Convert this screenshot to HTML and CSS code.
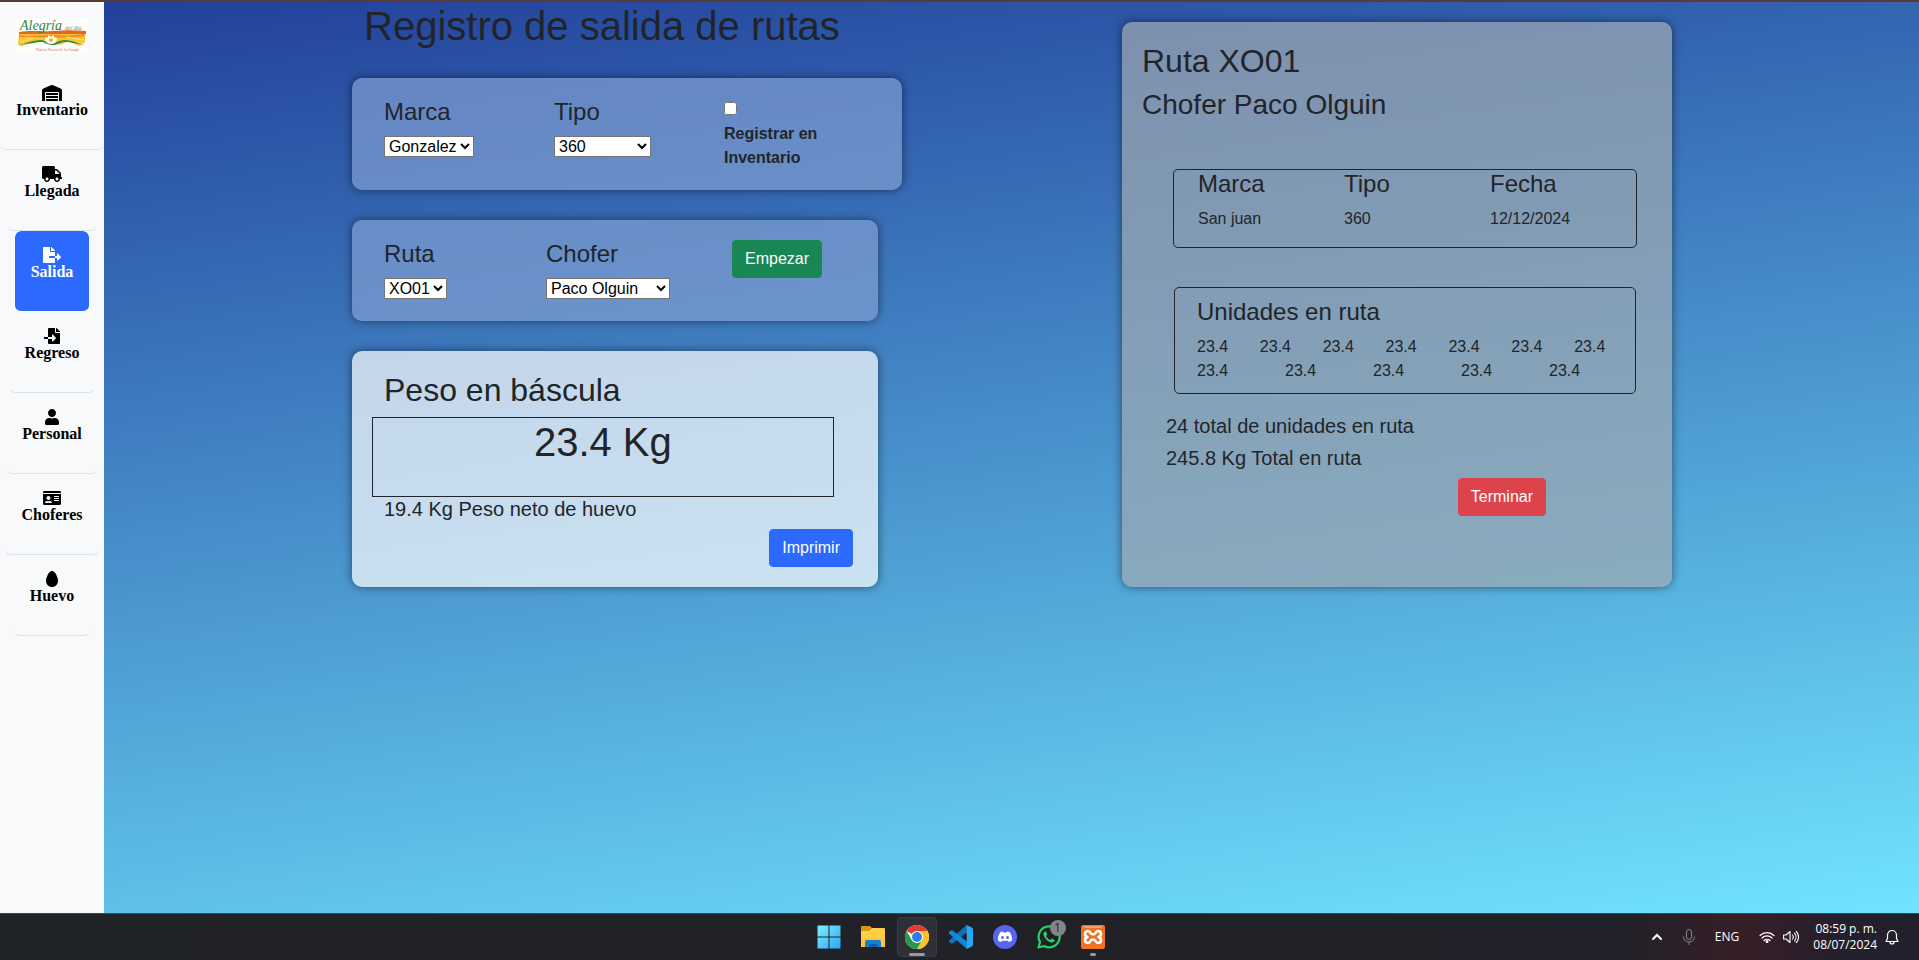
FILE: index.html
```html
<!DOCTYPE html>
<html lang="es">
<head>
<meta charset="utf-8">
<meta name="viewport" content="width=device-width, initial-scale=1">
<title>Registro de salida de rutas</title>
<link rel="stylesheet" href="styles.css">
</head>
<body>
<div class="screen">
  <div class="app">
    <nav class="sidebar" aria-label="Principal">
      <a class="logo" href="#inicio" aria-label="Inicio">
        <svg viewBox="0 0 72 35" width="72" height="35" aria-hidden="true">
          <rect width="72" height="35" fill="#fdfdf9"/>
          <path d="M3 14c12-2 22 0 34-1s22-1 33 0v3H3z" fill="#e5642c"/>
          <path d="M3 16h66v8l-6 4-10-5-9 4-10-6-10 3-9 1-9 3-4-1z" fill="#f7c62f"/>
          <path d="M3 17c14 2 24-1 36 0s20 0 30-1v2c-14 3-44 1-66 1z" fill="#ef9226"/>
          <path d="M4 24l14-4M6 27l16-5M50 19l18 3M52 22l14 4" stroke="#fbe58a" stroke-width="1"/>
          <path d="M29 22l1-3 2 1 0-3 3 2 3-2 0 3 2-1 1 3-3 3h-6z" fill="#fff"/>
          <circle cx="35" cy="22" r="2" fill="#f3b12c"/>
          <path d="M3 27c8-2 15-5 22-5 5 0 6 4 10 4s7-4 14-4 12 3 20 5c-9-1-14-3-20-3-6 0-8 4-14 3s-6-3-10-3-12 2-22 3z" fill="#3f8a3a"/>
          <text class="logo-name" x="4" y="12">Alegría</text>
          <text class="logo-sub" x="49" y="12">del día</text>
          <text class="logo-tag" x="20" y="33">Huevo Fresco de la Granja</text>
        </svg>
      </a>
      <a class="nav-item" href="#inventario">
        <svg class="nav-icon" viewBox="0 0 640 512" aria-hidden="true"><path d="M504 352H136.400c-4.400 0-8 3.600-8 8l-.1 48c0 4.400 3.600 8 8 8H504c4.400 0 8-3.600 8-8v-48c0-4.400-3.600-8-8-8zm0 96H136.100c-4.400 0-8 3.600-8 8l-.1 48c0 4.400 3.600 8 8 8h368c4.400 0 8-3.600 8-8v-48c0-4.400-3.600-8-8-8zm0-192H136.600c-4.400 0-8 3.600-8 8l-.1 48c0 4.400 3.600 8 8 8H504c4.400 0 8-3.600 8-8v-48c0-4.400-3.600-8-8-8zm106.500-139L338.400 3.700a48.150 48.150 0 0 0-36.900 0L29.500 117C11.700 124.500 0 141.900 0 161.300V504c0 4.400 3.600 8 8 8h80c4.400 0 8-3.600 8-8V256c0-17.600 14.600-32 32.600-32h382.800c18 0 32.600 14.400 32.600 32v248c0 4.400 3.600 8 8 8h80c4.400 0 8-3.600 8-8V161.300c0-19.400-11.700-36.800-29.500-44.300z"/></svg>
        <span>Inventario</span>
      </a>
      <a class="nav-item" href="#llegada">
        <svg class="nav-icon" viewBox="0 0 640 512" aria-hidden="true"><path d="M624 352h-16V243.900c0-12.700-5.100-24.900-14.100-33.900L494 110.100c-9-9-21.200-14.100-33.900-14.100H416V48c0-26.500-21.500-48-48-48H48C21.500 0 0 21.500 0 48v320c0 26.500 21.500 48 48 48h16c0 53 43 96 96 96s96-43 96-96h128c0 53 43 96 96 96s96-43 96-96h48c8.800 0 16-7.200 16-16v-32c0-8.800-7.200-16-16-16zM160 464c-26.500 0-48-21.500-48-48s21.500-48 48-48 48 21.500 48 48-21.500 48-48 48zm320 0c-26.500 0-48-21.500-48-48s21.500-48 48-48 48 21.500 48 48-21.500 48-48 48zm80-208H416V144h44.100l99.900 99.900V256z"/></svg>
        <span>Llegada</span>
      </a>
      <a class="nav-item active" href="#salida" aria-current="page">
        <svg class="nav-icon" viewBox="0 0 576 512" aria-hidden="true"><path d="M384 121.900c0-6.300-2.500-12.400-7-16.900L279.100 7c-4.500-4.500-10.600-7-17-7H256v128h128zM571 308l-95.700-96.400c-10.100-10.100-27.400-3-27.400 11.300V288h-64v64h64v65.200c0 14.300 17.300 21.400 27.400 11.300L571 332c6.600-6.600 6.600-17.400 0-24zm-379 28v-32c0-8.800 7.200-16 16-16h176V160H248c-13.200 0-24-10.800-24-24V0H24C10.700 0 0 10.700 0 24v464c0 13.300 10.700 24 24 24h336c13.300 0 24-10.700 24-24V352H208c-8.800 0-16-7.200-16-16z"/></svg>
        <span>Salida</span>
      </a>
      <a class="nav-item" href="#regreso">
        <svg class="nav-icon" viewBox="0 0 512 512" aria-hidden="true"><path d="M16 288c-8.800 0-16 7.200-16 16v32c0 8.800 7.200 16 16 16h112v-64zm489-183L407.100 7c-4.500-4.500-10.600-7-17-7H384v128h128v-6.100c0-6.300-2.500-12.400-7-16.900zm-153 31V0H152c-13.300 0-24 10.700-24 24v264h128v-65.200c0-14.300 17.300-21.400 27.400-11.300L379 308c6.600 6.700 6.600 17.400 0 24l-95.700 96.400c-10.100 10.100-27.400 3-27.400-11.300V352H128v136c0 13.300 10.700 24 24 24h336c13.300 0 24-10.700 24-24V160H376c-13.200 0-24-10.800-24-24z"/></svg>
        <span>Regreso</span>
      </a>
      <a class="nav-item" href="#personal">
        <svg class="nav-icon" viewBox="0 0 448 512" aria-hidden="true"><path d="M224 256c70.700 0 128-57.300 128-128S294.700 0 224 0 96 57.300 96 128s57.300 128 128 128zm89.600 32h-16.700c-22.200 10.200-46.900 16-72.900 16s-50.600-5.800-72.900-16h-16.700C60.200 288 0 348.200 0 422.400V464c0 26.500 21.500 48 48 48h352c26.500 0 48-21.500 48-48v-41.600c0-74.200-60.200-134.400-134.400-134.400z"/></svg>
        <span>Personal</span>
      </a>
      <a class="nav-item" href="#choferes">
        <svg class="nav-icon" viewBox="0 0 576 512" aria-hidden="true"><path d="M528 32H48C21.500 32 0 53.500 0 80v16h576V80c0-26.500-21.500-48-48-48zM0 432c0 26.500 21.500 48 48 48h480c26.500 0 48-21.500 48-48V128H0v304zm352-232c0-4.400 3.600-8 8-8h144c4.400 0 8 3.600 8 8v16c0 4.400-3.600 8-8 8H360c-4.400 0-8-3.600-8-8v-16zm0 64c0-4.400 3.600-8 8-8h144c4.400 0 8 3.600 8 8v16c0 4.400-3.600 8-8 8H360c-4.400 0-8-3.600-8-8v-16zm0 64c0-4.400 3.600-8 8-8h144c4.400 0 8 3.600 8 8v16c0 4.400-3.600 8-8 8H360c-4.400 0-8-3.600-8-8v-16zM176 192c35.300 0 64 28.700 64 64s-28.700 64-64 64-64-28.700-64-64 28.700-64 64-64zM67.100 396.200C75.500 370.500 99.600 352 128 352h8.200c12.300 5.100 25.700 8 39.800 8s27.600-2.900 39.800-8h8.200c28.400 0 52.500 18.500 60.900 44.200 3.200 9.900-5.200 19.800-15.600 19.800H82.700c-10.400 0-18.800-10-15.600-19.800z"/></svg>
        <span>Choferes</span>
      </a>
      <a class="nav-item" href="#huevo">
        <svg class="nav-icon" viewBox="0 0 384 512" aria-hidden="true"><path d="M192 0C86 0 0 214 0 320s86 192 192 192 192-86 192-192S298 0 192 0z"/></svg>
        <span>Huevo</span>
      </a>
    </nav>

    <main class="content">
      <section class="registro">
        <h1 class="title">Registro de salida de rutas</h1>
        <div class="card card-blue row">
          <div class="col">
            <label class="heading" for="marca">Marca</label>
            <div class="control"><select class="select" id="marca"><option>Gonzalez</option></select></div>
          </div>
          <div class="col">
            <label class="heading" for="tipo">Tipo</label>
            <div class="control"><select class="select select-tipo" id="tipo"><option>360</option></select></div>
          </div>
          <div class="col">
            <div class="check-line"><input class="check" type="checkbox" id="registrar"></div>
            <label class="check-label" for="registrar">Registrar en Inventario</label>
          </div>
        </div>

        <div class="card card-blue card-narrow row">
          <div class="col">
            <label class="heading" for="ruta">Ruta</label>
            <div class="control"><select class="select" id="ruta"><option>XO01</option></select></div>
          </div>
          <div class="col">
            <label class="heading" for="chofer">Chofer</label>
            <div class="control"><select class="select select-chofer" id="chofer"><option>Paco Olguin</option></select></div>
          </div>
          <div class="col col-action">
            <button class="btn btn-success" type="button">Empezar</button>
          </div>
        </div>

        <div class="card card-white card-narrow">
          <h2 class="weight-title">Peso en báscula</h2>
          <div class="weight">23.4 Kg</div>
          <p class="net">19.4 Kg Peso neto de huevo</p>
          <div class="print"><button class="btn btn-primary" type="button">Imprimir</button></div>
        </div>
      </section>

      <section class="card card-gray ruta">
        <h2 class="ruta-title">Ruta XO01</h2>
        <h3 class="ruta-driver">Chofer Paco Olguin</h3>
        <div class="box box-info row">
          <div class="col"><h4 class="heading">Marca</h4><p class="value">San juan</p></div>
          <div class="col"><h4 class="heading">Tipo</h4><p class="value">360</p></div>
          <div class="col"><h4 class="heading">Fecha</h4><p class="value">12/12/2024</p></div>
        </div>
        <div class="box box-units">
          <h4 class="heading units-title">Unidades en ruta</h4>
          <div class="row"><span class="col">23.4</span><span class="col">23.4</span><span class="col">23.4</span><span class="col">23.4</span><span class="col">23.4</span><span class="col">23.4</span><span class="col">23.4</span></div>
          <div class="row"><span class="col">23.4</span><span class="col">23.4</span><span class="col">23.4</span><span class="col">23.4</span><span class="col">23.4</span></div>
        </div>
        <div class="totals">
          <p class="total">24 total de unidades en ruta</p>
          <p class="total">245.8 Kg Total en ruta</p>
        </div>
        <div class="finish"><button class="btn btn-danger" type="button">Terminar</button></div>
      </section>
    </main>
  </div>

  <footer class="taskbar">
    <div class="apps">
      <button class="task" type="button" aria-label="Inicio">
        <svg viewBox="0 0 24 24" width="24" height="24"><defs><linearGradient id="win" x1="0" y1="0" x2="1" y2="1" gradientUnits="objectBoundingBox"><stop offset="0" stop-color="#7df0ff"/><stop offset="1" stop-color="#2ba6f5"/></linearGradient></defs><path fill="url(#win)" d="M.5.500h11v11h-11zM12.500.500h11v11h-11zM.5 12.500h11v11h-11zM12.500 12.500h11v11h-11z"/></svg>
      </button>
      <button class="task" type="button" aria-label="Explorador de archivos">
        <svg viewBox="0 0 24 24" width="24" height="24"><path d="M0 2a1 1 0 0 1 1-1h8l2 2-2 3H0z" fill="#d9960f"/><path d="M0 6h8l3-3h12a1 1 0 0 1 1 1v18H0z" fill="#ffcf48"/><path d="M0 13h24v9H0z" fill="#fbc02d" opacity=".6"/><path d="M4 22v-5a2 2 0 0 1 2-2h12a2 2 0 0 1 2 2v5z" fill="#1580cf"/><path d="M8 19h8v3H8z" fill="#0b62ac"/></svg>
      </button>
      <button class="task task-active" type="button" aria-label="Chrome">
        <svg viewBox="0 0 24 24" width="24" height="24"><circle cx="12" cy="12" r="12" fill="#fff"/><path d="M12 12L1.600 6A12 12 0 0 1 22.400 6z" fill="#e53a30"/><path d="M12 6h10.400A12 12 0 0 1 12 24l5.200-9z" fill="#fcc31e"/><path d="M12 24A12 12 0 0 1 1.600 6l5.200 9 5.200 3 5.200-3z" fill="#269a4b"/><circle cx="12" cy="12" r="6" fill="#fff"/><circle cx="12" cy="12" r="5" fill="#2f7de8"/></svg>
      </button>
      <button class="task" type="button" aria-label="Visual Studio Code">
        <svg viewBox="0 0 24 24" width="24" height="24"><path d="M17.500 0L0 15.500v1.500l2 1.500h1.500L18 7.500z" fill="#0f72b8"/><path d="M0 8.500V7l2-1.500h1.500L18 16.500V24z" fill="#1388d6"/><path d="M17.500 0L23 2.500l1 1.500v16l-1 1.500L17.500 24l.5-1z" fill="#2ba7f2"/></svg>
      </button>
      <button class="task" type="button" aria-label="Discord">
        <svg viewBox="0 0 24 24" width="24" height="24"><circle cx="12" cy="12" r="12" fill="#5865f2"/><path d="M7 7.500C8 6.900 9 6.600 10 6.500l.5 1h3l.5-1c1 .1 2 .4 3 1 1.500 2.500 2.300 5 2 8-1 .8-2 1.300-3.200 1.500l-.8-1.300H9L8.200 17C7 16.800 6 16.300 5 15.500c-.3-3 .5-5.500 2-8z" fill="#fff"/><circle cx="9.500" cy="12.500" r="1.500" fill="#5865f2"/><circle cx="14.500" cy="12.500" r="1.500" fill="#5865f2"/></svg>
      </button>
      <button class="task" type="button" aria-label="WhatsApp">
        <svg viewBox="0 0 24 24" width="24" height="24"><path d="M1.500 22.500l1.500-5.500a10.500 10.500 0 1 1 4 4z" fill="#202128" stroke="#25d366" stroke-width="2.200" stroke-linejoin="round"/><path d="M8 6.500c-1.500 1-2 2.500-1.200 4.200 1.200 3 3.500 5.300 6.500 6.500 2 .8 4.200 0 4.500-2.200l-3-1.500-1.500 1.500c-2-.8-3.500-2.200-4.300-4L10.300 9.500 9 6.500z" fill="#25d366"/></svg>
        <span class="count">1</span>
      </button>
      <button class="task task-open" type="button" aria-label="XAMPP">
        <svg viewBox="0 0 24 24" width="24" height="24"><rect width="24" height="24" rx="2" fill="#ee7325"/><path d="M2 1h20l-2 2H4z" fill="#f6a169"/><path d="M7 6c2.500 0 2 3.500 5 3.500S14.500 6 17 6s3 2 3 3-1 2.500-2.500 3c1.500.5 2.500 2 2.500 3s-.5 3-3 3-2-3.500-5-3.500S9.500 18 7 18s-3-2-3-3 1-2.500 2.500-3C5 11.500 4 10 4 9s.5-3 3-3z" fill="none" stroke="#fff" stroke-width="2.600" stroke-linejoin="round"/></svg>
      </button>
    </div>
    <div class="tray">
      <button class="tray-btn" type="button" aria-label="Mostrar iconos ocultos"><svg viewBox="0 0 12 16" width="12" height="16"><path d="M2 10l4-4 4 4" fill="none" stroke="#fff" stroke-width="2" stroke-linecap="round"/></svg></button>
      <button class="tray-btn" type="button" aria-label="Micrófono"><svg viewBox="0 0 12 16" width="12" height="16"><rect x="3.500" y=".5" width="5" height="10" rx="2.500" fill="none" stroke="#85838a"/><path d="M.5 7.500c0 3.500 2.500 5.500 5.500 5.500s5.500-2 5.500-5.500M6 13v3" fill="none" stroke="#85838a"/></svg></button>
      <button class="tray-btn" type="button">ENG</button>
      <button class="tray-btn" type="button" aria-label="Red y volumen">
        <svg viewBox="0 0 16 16" width="16" height="16"><path d="M1 6.500a10 10 0 0 1 14 0M3 9a7 7 0 0 1 10 0M5 11.500a4.200 4.200 0 0 1 6 0" fill="none" stroke="#fff" stroke-width="1.200" stroke-linecap="round"/><circle cx="8" cy="12.500" r="1.500" fill="#fff"/></svg>
        <svg viewBox="0 0 16 16" width="16" height="16"><path d="M.6 6h2.400l4-3.500v11L3 10H.6zM9.500 6c1 1.200 1 2.800 0 4M11.500 4.200c2 2.200 2 5.400 0 7.600M13.300 2.500c3 3.200 3 7.800 0 11" fill="none" stroke="#fff" stroke-width="1.100" stroke-linejoin="round" stroke-linecap="round"/></svg>
      </button>
      <div class="clock"><span>08:59 p. m.</span><span>08/07/2024</span></div>
      <button class="tray-btn" type="button" aria-label="Notificaciones"><svg viewBox="0 0 14 16" width="14" height="16"><path d="M7 1.500a4.500 4.500 0 0 0-4.500 4.500v3.500L1 12.500h12L11.500 9.500V6A4.500 4.500 0 0 0 7 1.500zM5 13a2 2 0 0 0 4 0" fill="none" stroke="#fff" stroke-width="1.200" stroke-linejoin="round"/></svg></button>
    </div>
  </footer>
</div>
</body>
</html>
```
FILE: styles.css
```css
* {
  box-sizing: border-box;
}

body {
  margin: 0;
  color: #212529;
  font-family: "Liberation Sans", Arial, sans-serif;
  font-size: 16px;
  line-height: 24px;
}

h1, h2, h3, h4, p {
  margin: 0;
  font-weight: 400;
}

.screen {
  display: flex;
  flex-direction: column;
  min-height: 100vh;
  border-top: 2px solid #5a3a34;
}

.app {
  display: flex;
  flex: 1;
}

/* Sidebar */
.sidebar {
  display: flex;
  flex: none;
  flex-direction: column;
  align-items: center;
  background: #f8f9fa;
}

.logo {
  padding: 16px;
}

.logo svg {
  display: block;
  overflow: visible;
}

.logo-name {
  fill: #2f8544;
  font: italic 14px "Liberation Serif", serif;
}

.logo-sub {
  fill: #5f9c5f;
  font: italic 6px "Liberation Serif", serif;
}

.logo-tag {
  fill: #d4714f;
  font: 4px "Liberation Serif", serif;
}

.nav-item {
  display: flex;
  flex-direction: column;
  align-items: center;
  padding: 16px 16px 30px;
  border-bottom: 1px solid #dee2e6;
  border-radius: 6px;
  color: #000;
  font-family: "Liberation Serif", "Times New Roman", serif;
  font-weight: 700;
  line-height: 18px;
  text-decoration: none;
}

.nav-item.active {
  border-color: transparent;
  background: #2b6afc;
  background-clip: padding-box;
  color: #fff;
}

.nav-icon {
  height: 16px;
  fill: currentColor;
}

/* Content */
.content {
  display: grid;
  flex: 1;
  grid-template-columns: minmax(0, 550px) minmax(0, 550px);
  justify-content: center;
  align-content: start;
  gap: 220px;
  padding-left: 1px;
  background: linear-gradient(172deg, #22409a 0%, #4993cd 50%, #70e4ff 100%);
}

.title {
  margin-bottom: 28px;
  padding-left: 12px;
  font-size: 40px;
  line-height: 48px;
}

.card {
  padding: 20px;
  border-radius: 10px;
  box-shadow: 0 0 10px rgba(0, 0, 0, .5);
}

.card + .card {
  margin-top: 30px;
}

.card-narrow {
  margin-right: 24px;
}

.card-blue {
  background: rgba(127, 158, 209, .7);
}

.card-white {
  background: rgba(253, 253, 253, .7);
}

.card-gray {
  background: rgba(159, 169, 177, .7);
}

.row {
  display: grid;
  grid-auto-columns: minmax(0, 1fr);
  grid-auto-flow: column;
}

.col {
  padding-left: 12px;
}

.heading {
  display: block;
  margin-bottom: 8px;
  font-size: 24px;
  line-height: 28px;
}

.box .heading {
  margin-bottom: 9px;
}

.control {
  display: flex;
  align-items: center;
  height: 25px;
}

.select {
  height: 21px;
  border: 1px solid #767676;
  background: #fff;
  color: #000;
  font: 16px "Liberation Sans", Arial, sans-serif;
}

.select-tipo {
  width: 97px;
}

.select-chofer {
  width: 124px;
}

.check-line {
  display: flex;
  align-items: center;
  height: 24px;
  padding-bottom: 3px;
}

.check {
  margin: 0;
}

.check-label {
  display: block;
  padding-right: 12px;
  font-weight: 700;
}

.btn {
  padding: 6px 12px;
  border: 1px solid transparent;
  border-radius: 4px;
  color: #fff;
  font: 16px/24px "Liberation Sans", Arial, sans-serif;
}

.col-action {
  padding-left: 36px;
}

.btn-success {
  border-color: #198754;
  background: #198754;
}

.btn-primary {
  border-color: #2b6afc;
  background: #2b6afc;
}

.btn-danger {
  border-color: #dd434b;
  background: #dd434b;
}

.weight-title {
  padding-left: 12px;
  margin-bottom: 8px;
  font-size: 32px;
  line-height: 38px;
}

.weight {
  width: 95%;
  height: 80px;
  border: 1px solid #212529;
  font-size: 40px;
  line-height: 48px;
  text-align: center;
}

.net {
  padding-left: 12px;
  margin-bottom: 8px;
  font-size: 20px;
}

.print {
  display: flex;
  justify-content: flex-end;
  padding-right: 5px;
}

/* Route summary */
.ruta {
  margin-top: 20px;
}

.ruta-title {
  margin-bottom: 8px;
  font-size: 32px;
  line-height: 38px;
}

.ruta-driver {
  margin-bottom: 47px;
  font-size: 28px;
  line-height: 34px;
}

.box {
  border: 1px solid #212529;
  border-radius: 5px;
}

.box-info {
  margin: 0 15px 39px 31px;
  padding: 0 12px;
}

.value {
  margin-bottom: 16px;
}

.box-units {
  margin: 0 16px 20px 32px;
  padding: 10px;
}

.units-title {
  padding-left: 12px;
}

.totals {
  display: grid;
  gap: 8px;
  padding-left: 24px;
  font-size: 20px;
}

.finish {
  display: flex;
  justify-content: flex-end;
  margin-top: 8px;
  padding-right: 106px;
}

/* Taskbar */
.taskbar {
  display: grid;
  grid-template-columns: 1fr auto 1fr;
  align-items: center;
  height: 47px;
  padding-left: 2px;
  border-top: 1px solid #45454b;
  background: linear-gradient(90deg, #202326 0%, #202128 84%, #371e27 91%, #23202d 96%, #23202d 100%);
  color: #fff;
  font-family: "Open Sans", "Noto Sans", sans-serif;
  font-size: 12px;
  line-height: 16px;
}

.apps {
  display: flex;
  grid-column: 2;
  gap: 4px;
}

.task {
  position: relative;
  display: grid;
  place-items: center;
  width: 40px;
  height: 40px;
  padding: 0;
  border: 1px solid transparent;
  border-radius: 4px;
  background: none;
}

.task-active {
  border-color: #3b3b42;
  background: #2f3037;
}

.task-active::after,
.task-open::after {
  position: absolute;
  bottom: 0;
  left: 50%;
  width: 16px;
  height: 3px;
  border-radius: 2px;
  background: #9b9a9a;
  content: "";
  transform: translateX(-50%);
}

.task-open::after {
  width: 6px;
}

.count {
  position: absolute;
  top: 2px;
  right: 2px;
  width: 16px;
  height: 16px;
  border-radius: 50%;
  background: #858587;
  color: #202128;
  font: 12px/16px "Open Sans", "Noto Sans", sans-serif;
  text-align: center;
}

.tray {
  display: flex;
  align-items: center;
  justify-self: end;
  gap: 20px;
  padding-right: 20px;
}

.tray-btn {
  display: flex;
  gap: 8px;
  padding: 0;
  border: 0;
  background: none;
  color: #fff;
  font: 12px/16px "Open Sans", "Noto Sans", sans-serif;
}

.clock {
  display: grid;
  margin: 0 -12px 0 -6px;
  text-align: right;
}
```
